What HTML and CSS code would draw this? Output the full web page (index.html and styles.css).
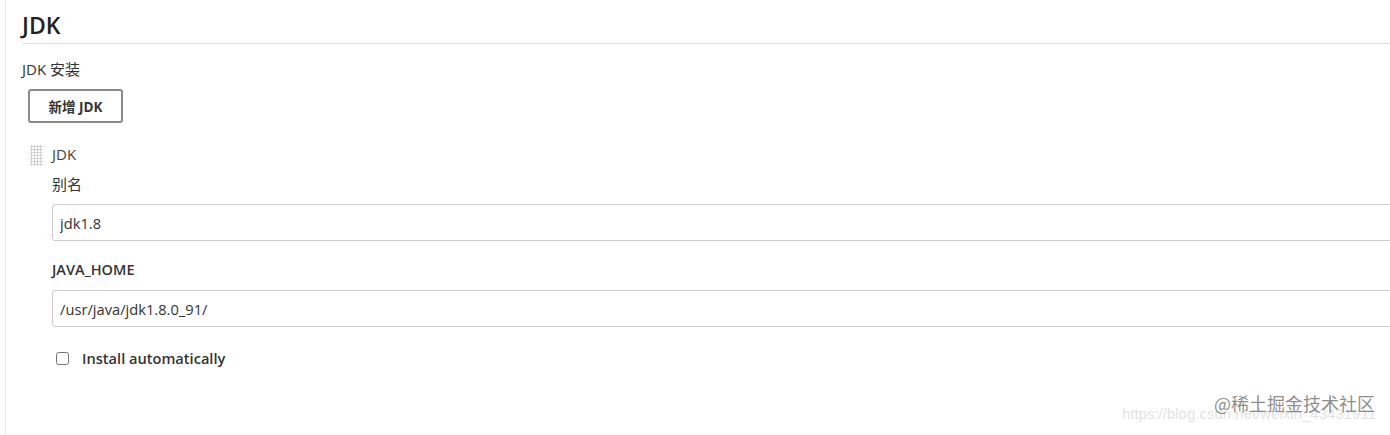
FILE: index.html
```html
<!DOCTYPE html>
<html lang="zh">
<head>
<meta charset="utf-8">
<link rel="stylesheet" href="styles.css">
</head>
<body>
<div class="page">
  <section class="section">
    <h2 class="section-title">JDK</h2>
    <div class="field-label">JDK 安装</div>
    <div class="btn-row"><button class="btn">新增 JDK</button></div>
    <div class="repeated">
      <div class="handle"></div>
      <div class="repeated-body">
        <div class="repeated-title">JDK</div>
        <div class="label">别名</div>
        <input class="text-input" type="text" value="jdk1.8">
        <div class="label label-bold">JAVA_HOME</div>
        <input class="text-input" type="text" value="/usr/java/jdk1.8.0_91/">
        <label class="check-row"><input type="checkbox" class="check"><span>Install automatically</span></label>
      </div>
    </div>
  </section>
  <div class="watermark">
    <span class="wm-url">https://blog.csdn.net/weixin_43431911</span>
    <span class="wm-main">@稀土掘金技术社区</span>
  </div>
</div>
</body>
</html>
```
FILE: styles.css
```css
html, body {
  margin: 0;
  padding: 0;
  background: #fff;
  width: 1390px;
  height: 435px;
  overflow: hidden;
}
body {
  font-family: "Open Sans", "Noto Sans CJK SC", sans-serif;
  color: #333;
}
.page {
  position: relative;
  height: 435px;
  margin-left: 5px;
  border-left: 1px solid #ececec;
  padding-left: 16px;
  overflow: hidden;
}
.section {
  padding-top: 10px;
}
.section-title {
  margin: 0;
  font-size: 23px;
  font-weight: 600;
  line-height: 30px;
  color: #222;
  padding-bottom: 3px;
  border-bottom: 1px solid #ddd;
}
.field-label {
  margin-top: 15px;
  font-size: 15px;
  line-height: 20px;
  color: #333;
}
.btn-row {
  margin-top: 10px;
  padding-left: 6px;
}
.btn {
  box-sizing: border-box;
  width: 95px;
  height: 34px;
  background: #fff;
  border: 2px solid #8a8a8a;
  border-radius: 3px;
  font-family: "Open Sans", "Noto Sans CJK SC", sans-serif;
  font-size: 13.5px;
  font-weight: 700;
  color: #333;
  padding: 0;
}
.repeated {
  display: flex;
  margin-top: 21px;
  padding-left: 8px;
}
.handle {
  width: 13px;
  height: 21px;
  margin-top: 1px;
  background-image: radial-gradient(circle, #d2d2d2 1px, transparent 1.1px);
  background-size: 3px 3px;
}
.repeated-body {
  flex: 1;
  padding-left: 9px;
  margin-right: -40px;
}
.repeated-title {
  font-size: 15px;
  line-height: 20px;
  color: #444;
}
.label {
  margin-top: 10px;
  font-size: 15px;
  line-height: 20px;
  color: #333;
}
.label-bold {
  margin-top: 19px;
  font-size: 14.5px;
  font-weight: 600;
}
.text-input {
  display: block;
  box-sizing: border-box;
  width: 100%;
  height: 37px;
  margin-top: 10px;
  border: 1px solid #ccc;
  border-radius: 3px;
  padding: 0 7px;
  font-family: "Open Sans", "Noto Sans CJK SC", sans-serif;
  font-size: 14.7px;
  color: #333;
  background: #fff;
}
.check-row {
  display: flex;
  align-items: center;
  margin-top: 21px;
  padding-left: 4px;
  font-size: 14.6px;
  font-weight: 600;
  color: #333;
}
.check {
  width: 13px;
  height: 13px;
  margin: 0 13px 0 0;
}
.watermark {
  position: absolute;
  right: 14px;
  bottom: 13px;
  width: 270px;
  height: 26px;
}
.wm-url {
  position: absolute;
  right: 0;
  bottom: 0;
  font-family: "Liberation Sans", sans-serif;
  font-size: 15px;
  color: rgba(180,180,180,0.4);
  white-space: nowrap;
}
.wm-main {
  position: absolute;
  right: 1px;
  bottom: 6px;
  font-family: "Noto Sans CJK SC", sans-serif;
  font-size: 18px;
  color: rgba(120,120,120,0.85);
  white-space: nowrap;
}
```
